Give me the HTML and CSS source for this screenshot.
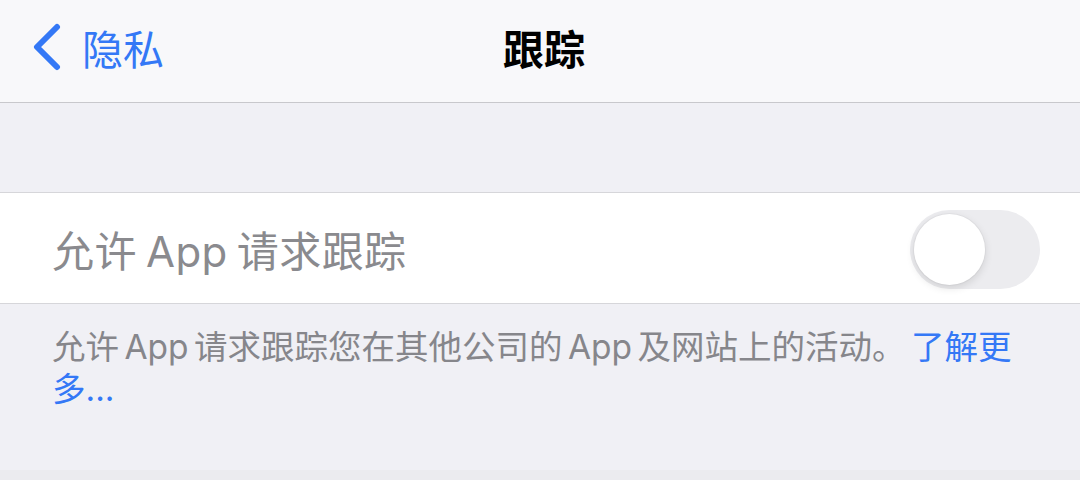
FILE: index.html
```html
<!DOCTYPE html>
<html lang="zh-CN">
<head>
<meta charset="utf-8">
<link rel="stylesheet" href="styles.css">
</head>
<body>
<div class="page">
  <header class="nav">
    <div class="back">
      <svg class="chev" width="30" height="48" viewBox="0 0 30 48"><path d="M26 4 L6 24 L26 44" fill="none" stroke="#3478f6" stroke-width="6" stroke-linecap="round" stroke-linejoin="round"/></svg>
      <span class="back-label">隐私</span>
    </div>
    <div class="title">跟踪</div>
  </header>
  <div class="gap"></div>
  <div class="cell">
    <span class="cell-label">允许 App 请求跟踪</span>
    <div class="toggle"><div class="knob"></div></div>
  </div>
  <div class="footer">
    <p class="note">允许 App 请求跟踪您在其他公司的 App 及网站上的活动。 <span class="link">了解更</span><span class="link">多...</span></p>
  </div>
  <div class="bottom"></div>
</div>
</body>
</html>
```
FILE: styles.css
```css
html, body {
  margin: 0;
  padding: 0;
}
body {
  width: 1080px;
  height: 480px;
  overflow: hidden;
  background: #f0f0f5;
  font-family: "Inter", "Noto Sans CJK SC", sans-serif;
}
.page {
  display: flex;
  flex-direction: column;
  height: 480px;
}
.nav {
  position: relative;
  height: 103px;
  background: #f8f8fa;
  border-bottom: 1px solid #c8c8cc;
  display: flex;
  align-items: center;
  padding-bottom: 8px;
  box-sizing: border-box;
  flex-shrink: 0;
}
.back {
  display: flex;
  align-items: center;
  padding-left: 31px;
  gap: 21px;
  color: #3478f6;
}
.chev {
  display: block;
}
.back-label {
  font-size: 41px;
  line-height: 48px;
  font-family: "Noto Sans CJK SC", sans-serif;
}
.title {
  position: absolute;
  left: 0;
  right: 0;
  top: 0;
  bottom: 8px;
  display: flex;
  align-items: center;
  justify-content: center;
  padding-left: 8px;
  font-size: 41px;
  font-weight: 700;
  color: #000;
  font-family: "Noto Sans CJK SC", sans-serif;
  pointer-events: none;
}
.gap {
  height: 89px;
  flex-shrink: 0;
}
.cell {
  height: 110px;
  background: #fff;
  border-top: 1px solid #d6d6da;
  border-bottom: 1px solid #d6d6da;
  display: flex;
  align-items: center;
  justify-content: space-between;
  padding: 0 40px 0 52px;
  flex-shrink: 0;
}
.cell-label {
  font-size: 42px;
  color: #8a8a8e;
  letter-spacing: 0.4px;
  word-spacing: -3px;
}
.toggle {
  width: 130px;
  height: 79px;
  border-radius: 40px;
  background: #ececef;
  position: relative;
  margin-top: 2px;
}
.knob {
  position: absolute;
  left: 4px;
  top: 4px;
  width: 71px;
  height: 71px;
  border-radius: 50%;
  background: #fff;
  box-shadow: 0 3px 8px rgba(0,0,0,0.12), 0 0 0 1px rgba(0,0,0,0.03);
}
.footer {
  padding: 22px 52px 0 52px;
  flex: 1;
}
.note {
  margin: 0;
  font-size: 33.5px;
  line-height: 42px;
  color: #86868b;
  width: 976px;
  word-spacing: -4px;
}
.link {
  color: #3478f6;
}
.bottom {
  height: 10px;
  background: #ebebef;
  flex-shrink: 0;
}
```
